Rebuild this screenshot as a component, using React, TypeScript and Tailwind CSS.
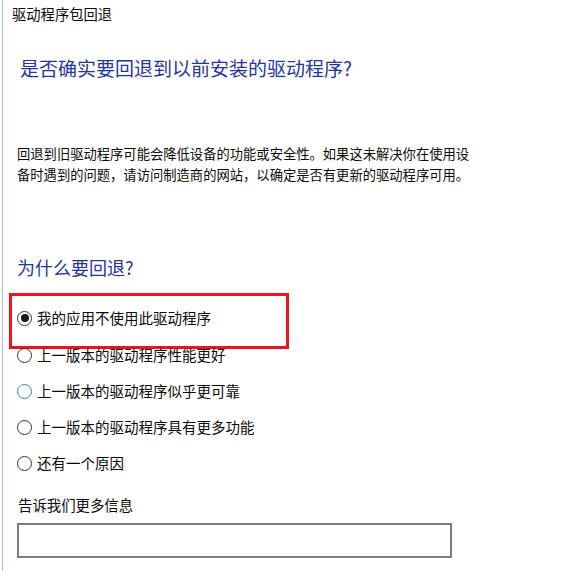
import React from "react";

const font = { fontFamily: '"Noto Sans CJK SC", "Noto Sans", sans-serif' };

function Radio({ checked, focus }: { checked?: boolean; focus?: boolean }) {
  return (
    <span
      className={`flex h-[15px] w-[15px] shrink-0 items-center justify-center rounded-full border bg-white ${
        focus ? "border-[#2f7fd6]" : "border-[#333333]"
      }`}
    >
      {checked && <span className="h-[8px] w-[8px] rounded-full bg-[#1a1a1a]" />}
    </span>
  );
}

function Option({ label, checked, focus, className = "" }: { label: string; checked?: boolean; focus?: boolean; className?: string }) {
  return (
    <div className={`flex h-[20px] items-center gap-[5px] pl-[14px] ${className}`}>
      <Radio checked={checked} focus={focus} />
      <span className="text-[14.5px] leading-[20px] text-[#0a0a0a] whitespace-nowrap">{label}</span>
    </div>
  );
}

export default function App() {
  return (
    <div className="h-[571px] w-[572px] overflow-hidden bg-white pl-[2px]" style={font}>
      <div className="h-full border-l border-[#9dc5ee]">
        {/* window title */}
        <div className="ml-[9px] pt-[4px] text-[14.3px] leading-[20px] text-[#0a0a0a]">驱动程序包回退</div>

        {/* main instruction */}
        <div className="ml-[17px] mt-[31px] text-[19px] leading-[26px] text-[#1f36a6] whitespace-nowrap">
          是否确实要回退到以前安装的驱动程序?
        </div>

        <div className="ml-[14px] mt-[62px] text-[13.3px] leading-[21px] text-[#0a0a0a]">
          <div className="whitespace-nowrap">回退到旧驱动程序可能会降低设备的功能或安全性。如果这未解决你在使用设</div>
          <div className="whitespace-nowrap">备时遇到的问题，请访问制造商的网站，以确定是否有更新的驱动程序可用。</div>
        </div>

        <div className="ml-[14px] mt-[69px] text-[18px] leading-[26px] text-[#1f36a6]">为什么要回退?</div>

        {/* highlighted option */}
        <div className="ml-[6px] mt-[13px] h-[56px] w-[280px] border-[3px] border-[#e8141e] pt-[12px]">
          <Option label="我的应用不使用此驱动程序" checked className="!pl-[5px]" />
        </div>

        <Option label="上一版本的驱动程序性能更好" className="mt-[-4px]" />
        <Option label="上一版本的驱动程序似乎更可靠" focus className="mt-[16px]" />
        <Option label="上一版本的驱动程序具有更多功能" className="mt-[16px]" />
        <Option label="还有一个原因" className="mt-[16px]" />

        <div className="ml-[15px] mt-[22px] text-[14.4px] leading-[20px] text-[#0a0a0a]">告诉我们更多信息</div>
        <div className="ml-[14px] mt-[8px] h-[35px] w-[435px] border-2 border-[#7d7d7d] bg-white" />
      </div>
    </div>
  );
}
